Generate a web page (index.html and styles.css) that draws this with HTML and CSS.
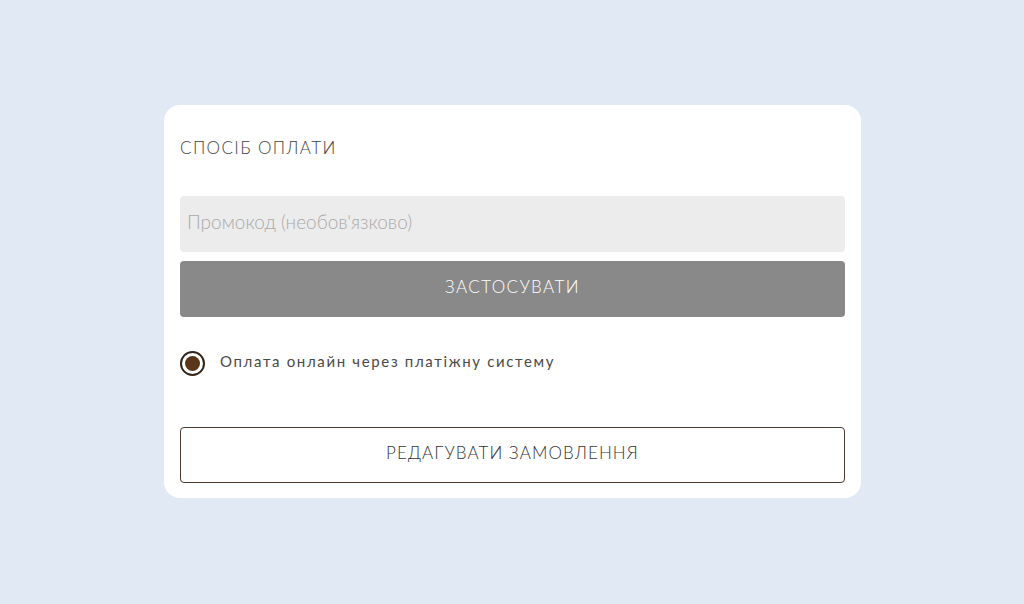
FILE: index.html
```html
<!DOCTYPE html>
<html lang="uk">
<head>
<meta charset="utf-8">
<link rel="stylesheet" href="styles.css">
</head>
<body>
<div class="page">
  <div class="card">
    <h2 class="title">СПОСІБ ОПЛАТИ</h2>
    <div class="promo">
      <input class="promo-input" type="text" placeholder="Промокод (необов'язково)">
      <button class="apply">ЗАСТОСУВАТИ</button>
    </div>
    <label class="radio-row">
      <span class="radio"><span class="radio-dot"></span></span>
      <span class="radio-text">Оплата онлайн через платіжну систему</span>
    </label>
    <button class="edit">РЕДАГУВАТИ ЗАМОВЛЕННЯ</button>
  </div>
</div>
</body>
</html>
```
FILE: styles.css
```css
html, body {
  margin: 0;
  padding: 0;
}
body {
  background: #e1eaf4;
  font-family: Lato, "Open Sans", sans-serif;
  width: 1024px;
  height: 604px;
  overflow: hidden;
}
.page {
  padding-top: 105px;
  padding-left: 164px;
}
.card {
  width: 697px;
  box-sizing: border-box;
  background: #ffffff;
  border-radius: 16px;
  padding: 0 16px 15px 16px;
  display: flex;
  flex-direction: column;
}
.title {
  margin: 0;
  padding-top: 33px;
  height: 58px;
  box-sizing: border-box;
  font-size: 17px;
  font-weight: 300;
  letter-spacing: 1.4px;
  color: #3f3f3f;
  line-height: 20px;
}
.promo {
  display: flex;
  flex-direction: column;
  gap: 9px;
  margin-top: 33px;
}
.promo-input {
  height: 56px;
  box-sizing: border-box;
  border: none;
  background: #ececec;
  border-radius: 4px;
  padding: 0 0 5px 7px;
  font-family: inherit;
  font-size: 19px;
  color: #555;
  outline: none;
}
.promo-input::placeholder {
  color: #a9a9a9;
  font-weight: 300;
}
.apply {
  height: 56px;
  border: none;
  background: #898989;
  border-radius: 4px;
  color: #ffffff;
  font-family: inherit;
  font-size: 17px;
  letter-spacing: 1.4px;
  font-weight: 300;
  padding: 0 0 5px 0;
}
.radio-row {
  display: flex;
  align-items: center;
  gap: 15px;
  margin-top: 33px;
  height: 26px;
}
.radio {
  width: 25px;
  height: 25px;
  box-sizing: border-box;
  border: 2px solid #35241a;
  border-radius: 50%;
  display: flex;
  align-items: center;
  justify-content: center;
}
.radio-dot {
  width: 15px;
  height: 15px;
  border-radius: 50%;
  background: #5a351a;
}
.radio-text {
  font-size: 15px;
  letter-spacing: 1.65px;
  color: #4a4a4a;
  padding-bottom: 4px;
}
.edit {
  margin-top: 51px;
  height: 56px;
  background: #ffffff;
  border: 1.5px solid #4a3a30;
  border-radius: 4px;
  font-family: inherit;
  font-size: 17px;
  font-weight: 300;
  letter-spacing: 1.1px;
  color: #333333;
  padding: 0 0 5px 0;
}
```
